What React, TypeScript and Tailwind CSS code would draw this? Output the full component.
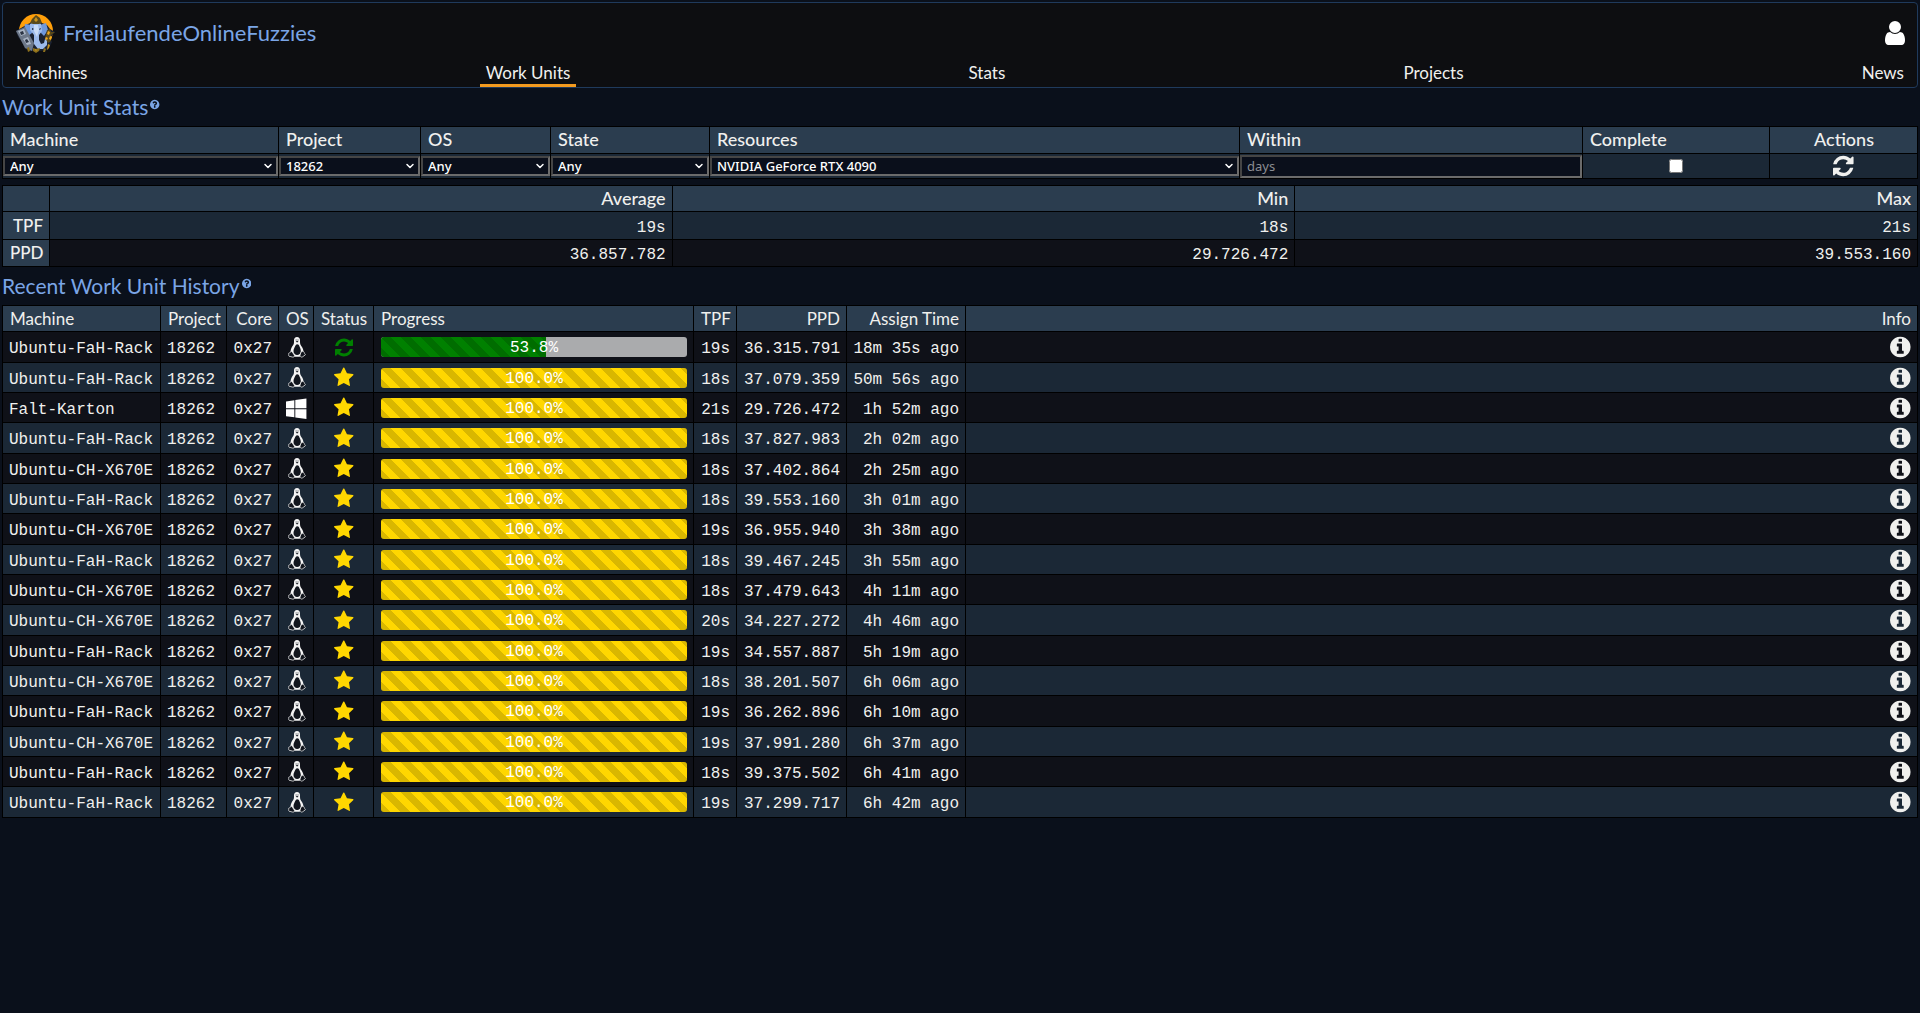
import type { ReactNode } from "react";
import { ChevronDown } from "lucide-react";

const INFO_DISC =
  "m640 416q0 209-103 385.5t-279.5 279.5-385.5 103-385.5-103-279.5-279.5-103-385.5 103-385.5 279.5-279.5 385.5-103 385.5 103 279.5 279.5 103 385.5z";
const HELP_DISC =
  "m384 192q0 209-103 385.5t-279.5 279.5-385.5 103-385.5-103-279.5-279.5-103-385.5 103-385.5 279.5-279.5 385.5-103 385.5 103 279.5 279.5 103 385.5z";

const glyphs = {
  refresh: {
    width: 1536,
    d: "M1511 1056q0 5-1 7-64 268-268 434.5t-478 166.5q-146 0-282.5-55t-243.5-157l-129 129q-19 19-45 19t-45-19-19-45v-448q0-26 19-45t45-19h448q26 0 45 19t19 45-19 45l-137 137q71 66 161 102t187 36q134 0 250-65t186-179q11-17 53-117 8-23 30-23h192q13 0 22.5 9.5t9.5 22.5zm25-800v448q0 26-19 45t-45 19h-448q-26 0-45-19t-19-45 19-45l138-138q-148-137-349-137-134 0-250 65t-186 179q-11 17-53 117-8 23-30 23h-199q-13 0-22.5-9.5t-9.5-22.5v-7q65-268 270-434.5t480-166.5q146 0 284 55.5t245 156.5l130-129q19-19 45-19t45 19 19 45z",
  },
  user: {
    width: 1280,
    d: "M1280 1399q0 109-62.5 187t-150.5 78h-854q-88 0-150.5-78t-62.5-187q0-85 8.5-160.5t31.5-152 58.5-131 94-89 134.5-34.5q131 128 313 128t313-128q76 0 134.5 34.5t94 89 58.5 131 31.5 152 8.5 160.5zm-256-887q0 159-112.5 271.5t-271.5 112.5-271.5-112.5-112.5-271.5 112.5-271.5 271.5-112.5 271.5 112.5 112.5 271.5z",
  },
  info: {
    width: 1536,
    d:
      "M1024 1376v-160q0-14-9-23t-23-9h-96v-512q0-14-9-23t-23-9h-320q-14 0-23 9t-9 23v160q0 14 9 23t23 9h96v320h-96q-14 0-23 9t-9 23v160q0 14 9 23t23 9h448q14 0 23-9t9-23zm-128-896v-160q0-14-9-23t-23-9h-192q-14 0-23 9t-9 23v160q0 14 9 23t23 9h192q14 0 23-9t9-23z" +
      INFO_DISC,
  },
  help: {
    width: 1536,
    d:
      "M896 1376v-192q0-14-9-23t-23-9h-192q-14 0-23 9t-9 23v192q0 14 9 23t23 9h192q14 0 23-9t9-23zm256-672q0-88-55.5-163t-138.5-116-170-41q-243 0-371 213-15 24 8 42l132 100q7 6 19 6 16 0 25-12 53-68 86-92 34-24 86-24 48 0 85.5 26t37.5 59q0 38-20 61t-68 45q-63 28-115.5 86.5t-52.5 125.5v36q0 14 9 23t23 9h192q14 0 23-9t9-23q0-19 21.5-49.5t54.5-49.5q32-18 49-28.5t46-35 44.5-48 28-60.5 12.5-81z" +
      HELP_DISC,
  },
  star: {
    width: 1664,
    d: "M1664 647q0 22-26 48l-363 354 86 500q1 7 1 20 0 21-10.5 35.5t-30.5 14.5q-19 0-40-12l-449-236-449 236q-22 12-40 12-21 0-31.5-14.5t-10.5-35.5q0-6 2-20l86-500-364-354q-25-27-25-48 0-37 56-46l502-73 225-455q19-41 49-41t49 41l225 455 502 73q56 9 56 46z",
  },
  windows: {
    width: 1664,
    d: "M682 1006v651l-682-94v-557h682zm0-743v659h-682v-565zm982 743v786l-907-125v-661h907zm0-878v794h-907v-669z",
  },
} as const;

function Glyph({ name, className }: { name: keyof typeof glyphs; className: string }) {
  const { width, d } = glyphs[name];
  return (
    <svg aria-hidden viewBox={`0 0 ${width} 1792`} fill="currentColor" className={`block w-auto ${className}`}>
      <path d={d} />
    </svg>
  );
}

function Tux({ className }: { className: string }) {
  return (
    <svg aria-hidden viewBox="0 0 18 21" className={`block w-auto ${className}`}>
      <path
        d="M9 0C7 0 6 1.3 6 3.2c0 2 .2 3.2-.8 4.8C4 9.800 2.800 11.500 2.600 14L2.500 16l4 3.800h5L15.500 16c.3-2.800-.9-5.200-2.400-7.200C11.900 7.200 12 5.500 12 3.200 12 1.300 11 0 9 0z"
        fill="#f4f4f4"
      />
      <path d="M9.200 7.200c1.200 0 1.800.9 2.300 2.200.6 1.500 1.400 2.900 1.300 4.800-.1 2.100-1.600 3.700-3.700 3.700s-3.600-1.700-3.600-3.700c0-1.900.9-3.300 1.500-4.700.5-1.300 1-2.300 2.200-2.300z" fill="#11151d" />
      <path d="M7.700 2.400h.8v1h-.8zM9.600 2.400h.8v1h-.8zM7.600 4.400l1.500-.5 1.500.5-1.500 1z" fill="#11151d" />
      <path
        d="M3.200 14.300l1.500 1.400 1.700 2.500c.4 1.100-.4 2-1.700 1.900l-3.700-.9c-.8-.4-.1-1.400-.4-2.600-.1-.8 1.500-.7 1.900-1.400zM14.600 14.300l-1.700.9-.9 3c-.1 1.600 1.400 2.400 2.600 1.600l2.600-1.800c.6-.6-.5-1-.8-1.900-.1-.9-.8-1.900-1.800-1.800z"
        fill="#11151d"
        stroke="#e4e4e4"
        strokeWidth=".8"
      />
    </svg>
  );
}

function Logo() {
  return (
    <svg aria-hidden viewBox="0 0 40 40" className="size-10">
      <circle cx="21" cy="18" r="17" fill="#ff9f0a" />
      <path d="M11 12l-5 3-5 3 2 6 4 5 3 7 6 2h9l8-1 4-8-2-4 5-6-5-3-3-4-5-2-5-1-3-1-4 2z" fill="#1b2231" />
      <path d="M10 11l-1 7 4 5 4-3v-8zM31 10l2 7-4 6-4-4v-7z" fill="#6f98da" />
      <path d="M15 11l6-3 5 3 1 7-3 4v5l2 4 3-1 1-4 2 1v5l-4 4h-5l-4-5v-9l-4-5z" fill="#9dbbec" />
      <path d="M19 12h4l1 5-2 7-3-6z" fill="#c9dcf8" />
      <path d="M15 10l2-4 4-4 4 3 2 5-3 1h-6z" fill="#594a1c" />
      <path d="M19 7l2-3 2 3-2 2z" fill="#c8921c" />
      <path d="M1 18l9-4 9 16-2 8-7-3z" fill="#6d7889" />
      <path d="M3 18l6-2 2 5-5 2zM8 26l5-2 3 7-4 1z" fill="#aab5c5" />
      <path d="M5 19l3-1 1 3-3 1zM10 27l2-1 2 3-3 1z" fill="#2a3342" />
      <path d="M32 17l3-1 1 3h4l-4 3v6l-3 2-3-5z" fill="#5c4a18" />
      <path d="M33 18l2 1-1 3-2-1zM35 23l2 1-1 3-2-1zM31 24l2 1-1 2-2-1z" fill="#f2a91c" />
      <path d="M18 35l3 1 4-1-1 3-3 2-3-2zM12 35l2-1 1 4-2 1zM29 35l2 1-1 3h-2z" fill="#8d701c" />
      <path d="M20 36l2 1-1 1-1-1zM33 31l2 1-1 3-2 2z" fill="#c8921c" />
      <path d="M17 15l2 1-2 1zM24 16l2-1-1 2z" fill="#111722" />
    </svg>
  );
}

const navItems = ["Machines", "Work Units", "Stats", "Projects", "News"];

const filters = [
  { id: "machine", label: "Machine", value: "Any", col: "w-[276px]" },
  { id: "project", label: "Project", value: "18262", col: "w-[142px]" },
  { id: "os", label: "OS", value: "Any", col: "w-[130px]" },
  { id: "state", label: "State", value: "Any", col: "w-[159px]" },
  { id: "resources", label: "Resources", value: "NVIDIA GeForce RTX 4090", col: "" },
];

const stats = [
  { label: "TPF", values: ["19s", "18s", "21s"], row: "h-7 bg-[#1b2836]" },
  { label: "PPD", values: ["36.857.782", "29.726.472", "39.553.160"], row: "h-[27px] bg-[#0f1118]" },
];

const RACK = "Ubuntu-FaH-Rack";
const X670E = "Ubuntu-CH-X670E";

type Unit = { machine: string; progress: number; tpf: string; ppd: string; assigned: string };

const units: Unit[] = [
  { machine: RACK, progress: 53.8, tpf: "19s", ppd: "36.315.791", assigned: "18m 35s ago" },
  { machine: RACK, progress: 100, tpf: "18s", ppd: "37.079.359", assigned: "50m 56s ago" },
  { machine: "Falt-Karton", progress: 100, tpf: "21s", ppd: "29.726.472", assigned: "1h 52m ago" },
  { machine: RACK, progress: 100, tpf: "18s", ppd: "37.827.983", assigned: "2h 02m ago" },
  { machine: X670E, progress: 100, tpf: "18s", ppd: "37.402.864", assigned: "2h 25m ago" },
  { machine: RACK, progress: 100, tpf: "18s", ppd: "39.553.160", assigned: "3h 01m ago" },
  { machine: X670E, progress: 100, tpf: "19s", ppd: "36.955.940", assigned: "3h 38m ago" },
  { machine: RACK, progress: 100, tpf: "18s", ppd: "39.467.245", assigned: "3h 55m ago" },
  { machine: X670E, progress: 100, tpf: "18s", ppd: "37.479.643", assigned: "4h 11m ago" },
  { machine: X670E, progress: 100, tpf: "20s", ppd: "34.227.272", assigned: "4h 46m ago" },
  { machine: RACK, progress: 100, tpf: "19s", ppd: "34.557.887", assigned: "5h 19m ago" },
  { machine: X670E, progress: 100, tpf: "18s", ppd: "38.201.507", assigned: "6h 06m ago" },
  { machine: RACK, progress: 100, tpf: "19s", ppd: "36.262.896", assigned: "6h 10m ago" },
  { machine: X670E, progress: 100, tpf: "19s", ppd: "37.991.280", assigned: "6h 37m ago" },
  { machine: RACK, progress: 100, tpf: "18s", ppd: "39.375.502", assigned: "6h 41m ago" },
  { machine: RACK, progress: 100, tpf: "19s", ppd: "37.299.717", assigned: "6h 42m ago" },
];

const cell = "border border-black py-0 pr-1.5 pl-[7px]";
const head = `${cell} bg-[#2b3d4f]`;
const mono = "border border-black px-1.5 pt-1 pb-0 font-['Liberation_Mono',monospace] text-base leading-[22px]";
const table = "w-full table-fixed border-collapse whitespace-nowrap";
const field =
  "block w-full rounded-none border-2 border-t-[#454545] border-r-[#6b6b6b] border-b-[#6b6b6b] border-l-[#454545] bg-[#0a0f1b] font-['Noto_Sans',sans-serif] text-[13px] leading-4";

function Heading({ children }: { children: ReactNode }) {
  return (
    <h2 className="flex h-[38px] items-center gap-0.5 text-[21px] leading-6 text-[#7aa5e6]">
      {children}
      <button type="button" aria-label="Help" className="mb-1.5">
        <Glyph name="help" className="h-[11px]" />
      </button>
    </h2>
  );
}

function ProgressBar({ value }: { value: number }) {
  const fill = value < 100 ? "bg-[#008000]" : "bg-[#ffd700]";
  return (
    <div className="relative h-5 overflow-hidden rounded-[3px] bg-[#aaabad]">
      <div
        className={`h-full ${fill} bg-[linear-gradient(45deg,rgba(0,0,0,.15)_25%,transparent_25%,transparent_50%,rgba(0,0,0,.15)_50%,rgba(0,0,0,.15)_75%,transparent_75%)] bg-[length:20px_20px]`}
        style={{ width: `${value}%` }}
      />
      <span className="absolute inset-0 text-center font-['Liberation_Mono',monospace] text-base leading-[22px] text-white">
        {value.toFixed(1)}%
      </span>
    </div>
  );
}

function Header() {
  return (
    <header className="rounded border border-[#1f3a5c] bg-[#0d0e11]">
      <div className="flex h-[57px] items-center justify-between px-3 pt-0.5">
        <a href="#" className="flex items-center gap-2 text-[22px] text-[#7aa5e6]">
          <Logo />
          FreilaufendeOnlineFuzzies
        </a>
        <button type="button" aria-label="Account" className="text-white">
          <Glyph name="user" className="h-7" />
        </button>
      </div>
      <nav className="flex justify-between px-[7px]">
        {navItems.map((item) => (
          <a
            key={item}
            href="#"
            className={`border-b-3 px-1.5 pt-0.5 leading-[22px] ${item === "Work Units" ? "border-[#f29a1f]" : "border-transparent"}`}
          >
            {item}
          </a>
        ))}
      </nav>
    </header>
  );
}

function Filters() {
  return (
    <table className={table}>
      <colgroup>
        {filters.map((f) => (
          <col key={f.id} className={f.col} />
        ))}
        <col className="w-[343px]" />
        <col className="w-[187px]" />
        <col className="w-[148px]" />
      </colgroup>
      <thead>
        <tr className="h-[27px] text-left text-lg leading-6 *:pb-0.5 *:font-medium">
          {filters.map((f) => (
            <th key={f.id} className={head}>
              <label htmlFor={f.id}>{f.label}</label>
            </th>
          ))}
          <th className={head}>
            <label htmlFor="within">Within</label>
          </th>
          <th className={head}>
            <label htmlFor="complete">Complete</label>
          </th>
          <th className={`${head} text-center`}>Actions</th>
        </tr>
      </thead>
      <tbody>
        <tr className="h-[25px] bg-[#1b2836]">
          {filters.map((f) => (
            <td key={f.id} className="border border-black p-0">
              <div className="relative">
                <select id={f.id} className={`${field} h-5 appearance-none px-[5px] font-medium text-white`}>
                  <option>{f.value}</option>
                </select>
                <ChevronDown
                  aria-hidden
                  strokeWidth={3}
                  className="pointer-events-none absolute top-1 right-1 size-3 text-white"
                />
              </div>
            </td>
          ))}
          <td className="border border-black p-0">
            <input id="within" placeholder="days" className={`${field} h-[23px] px-[5px] placeholder:text-[#8a8d93]`} />
          </td>
          <td className="border border-black p-0">
            <input id="complete" type="checkbox" className="mx-auto block size-3.5" />
          </td>
          <td className="border border-black p-0">
            <button type="button" aria-label="Refresh" className="mx-auto block">
              <Glyph name="refresh" className="h-6" />
            </button>
          </td>
        </tr>
      </tbody>
    </table>
  );
}

function Stats() {
  return (
    <table className={`${table} mt-1.5 text-right`}>
      <colgroup>
        <col className="w-[47px]" />
        <col />
        <col />
        <col />
      </colgroup>
      <thead>
        <tr className="h-[26px] text-lg leading-[22px]">
          <td className={head} />
          {["Average", "Min", "Max"].map((label) => (
            <th key={label} className={`${head} pb-0.5 text-right font-medium`}>
              {label}
            </th>
          ))}
        </tr>
      </thead>
      <tbody>
        {stats.map((s) => (
          <tr key={s.label} className={s.row}>
            <th className={`${head} text-right font-medium`}>{s.label}</th>
            {s.values.map((v) => (
              <td key={v} className={mono}>
                {v}
              </td>
            ))}
          </tr>
        ))}
      </tbody>
    </table>
  );
}

function History() {
  return (
    <table className={table}>
      <colgroup>
        <col className="w-[158px]" />
        <col className="w-[66px]" />
        <col className="w-[52px]" />
        <col className="w-[35px]" />
        <col className="w-[60px]" />
        <col className="w-[320px]" />
        <col className="w-[43px]" />
        <col className="w-[110px]" />
        <col className="w-[119px]" />
        <col />
      </colgroup>
      <thead>
        <tr className="h-[26px] text-left *:font-normal">
          <th className={head}>Machine</th>
          <th className={`${head} text-right`}>Project</th>
          <th className={`${head} text-right`}>Core</th>
          <th className={`${head} text-center`}>OS</th>
          <th className={`${head} text-center`}>Status</th>
          <th className={head}>Progress</th>
          <th className={`${head} text-right`}>TPF</th>
          <th className={`${head} text-right`}>PPD</th>
          <th className={`${head} text-right`}>Assign Time</th>
          <th className={`${head} text-right`}>Info</th>
        </tr>
      </thead>
      <tbody>
        {units.map((u) => (
          <tr key={u.ppd} className="h-[30px] bg-[#0f1118] even:bg-[#1b2836] nth-[3n+1]:h-[31px]">
            <td className={mono}>{u.machine}</td>
            <td className={mono}>18262</td>
            <td className={`${mono} text-right`}>0x27</td>
            <td className={cell}>
              {u.machine === "Falt-Karton" ? (
                <Glyph name="windows" className="mx-auto h-[22px] text-white" />
              ) : (
                <Tux className="mx-auto h-[21px]" />
              )}
            </td>
            <td className={cell}>
              {u.progress < 100 ? (
                <Glyph name="refresh" className="mx-auto h-[21px] text-[#008000]" />
              ) : (
                <Glyph name="star" className="mx-auto h-[21px] text-[#ffd700]" />
              )}
            </td>
            <td className={cell}>
              <ProgressBar value={u.progress} />
            </td>
            <td className={`${mono} text-right`}>{u.tpf}</td>
            <td className={`${mono} text-right`}>{u.ppd}</td>
            <td className={`${mono} text-right`}>{u.assigned}</td>
            <td className={cell}>
              <button type="button" aria-label="Info" className="ml-auto block">
                <Glyph name="info" className="h-6" />
              </button>
            </td>
          </tr>
        ))}
      </tbody>
    </table>
  );
}

export default function App() {
  return (
    <div className="min-h-screen bg-[#0a101b] p-0.5 font-[Lato,sans-serif] text-[17px] leading-6 text-[#f0f0ee]">
      <Header />
      <main>
        <Heading>Work Unit Stats</Heading>
        <Filters />
        <Stats />
        <Heading>Recent Work Unit History</Heading>
        <History />
      </main>
    </div>
  );
}
